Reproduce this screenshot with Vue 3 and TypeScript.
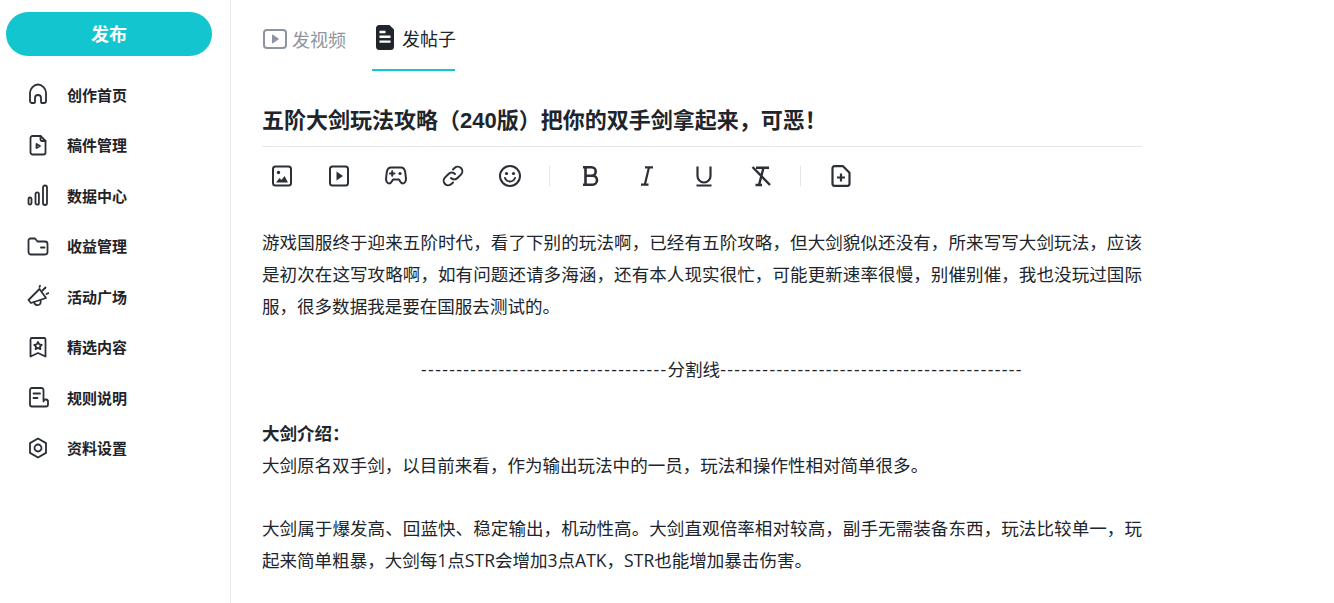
<script setup lang="ts">
interface NavItem {
  label: string
  paths: string[]
}

const navItems: NavItem[] = [
  { label: '创作首页', paths: ['M3 18V9.500C3 6 7 1.500 11 1.500S19 6 19 9.500V18a2 2 0 0 1-2 2h-2a1 1 0 0 1-1-1V15a3 3 0 0 0-6 0v4a1 1 0 0 1-1 1H5a2 2 0 0 1-2-2Z'] },
  { label: '稿件管理', paths: ['M5.500 2H13.500L18.500 7V18.500a2 2 0 0 1-2 2H5.500a2 2 0 0 1-2-2V4a2 2 0 0 1 2-2Z', 'M13.500 2V5.500a1.500 1.500 0 0 0 1.500 1.500H18.500', 'M9.500 10 13 12 9.500 14Z'] },
  { label: '数据中心', paths: ['M1.500 15a1.500 1.500 0 0 1 3 0v4a1.500 1.500 0 0 1-3 0Z', 'M8.500 10a1.700 1.700 0 0 1 3.400 0v9a1.700 1.700 0 0 1-3.400 0Z', 'M16 3.500a2 2 0 0 1 4 0V19a2 2 0 0 1-4 0Z'] },
  { label: '收益管理', paths: ['M1.500 5.500a2 2 0 0 1 2-2h4.500L10.500 6.500H18a2.500 2.500 0 0 1 2.500 2.500V17A2.500 2.500 0 0 1 18 19.500H4A2.500 2.500 0 0 1 1.500 17Z', 'M14 12.500H17.500'] },
  { label: '活动广场', paths: ['M12.500 4 19 13 4 18 1.500 15Z', 'M7 17c.5 2.500 2.500 3.500 4.500 3s2.500-2.500 2-5', 'M15.500 5.500l3-3', 'M19.500 9l2-.8', 'M12.500 2l.5-1.200'] },
  { label: '精选内容', paths: ['M5 2H17a1.500 1.500 0 0 1 1.500 1.500V20.500L11 17 3.500 20.500V3.500A1.500 1.500 0 0 1 5 2Z', 'M11 6l1.300 2.400 2.500.4-1.800 1.800.4 2.500-2.400-1.200-2.400 1.200.4-2.500-1.800-1.800 2.500-.4Z'] },
  { label: '规则说明', paths: ['M16.500 14V4a2 2 0 0 0-2-2H5a2 2 0 0 0-2 2V18.500a2 2 0 0 0 2 2H19a2 2 0 0 0 2-2V16a2.200 2.200 0 0 0-4.500-.5', 'M6.500 7.500H13', 'M6.500 12H10.500'] },
  { label: '资料设置', paths: ['M11 1.500 19 6.100V15.900L11 20.500 3 15.900V6.100Z', 'M11 7.500a3.500 3.500 0 1 1 0 7 3.500 3.500 0 0 1 0-7Z'] },
]

const leftDashes = '-'.repeat(35)
const rightDashes = '-'.repeat(43)
</script>

<template>
  <div class="page">
    <aside class="side">
      <button class="publish">发布</button>
      <nav class="nav">
        <a v-for="item in navItems" :key="item.label" class="nav-item">
          <svg class="nav-icon" viewBox="0 0 22 22" fill="none" stroke="#2b2f36" stroke-width="1.800" stroke-linejoin="round" stroke-linecap="round">
            <path v-for="d in item.paths" :key="d" :d="d" />
          </svg>
          <span>{{ item.label }}</span>
        </a>
      </nav>
    </aside>

    <main class="main">
      <div class="tabs">
        <div class="tab">
          <svg class="tab-icon video" viewBox="0 0 24 20" fill="none">
            <rect x="1" y="1" width="22" height="18" rx="3" stroke="#8f959e" stroke-width="2" />
            <path d="M9.500 6v8l6-4Z" fill="#8f959e" stroke="#8f959e" stroke-linejoin="round" />
          </svg>
          <span>发视频</span>
        </div>
        <div class="tab active">
          <svg class="tab-icon doc" viewBox="0 0 18 25">
            <path d="M3.500 0H13.500L18 4.500V21.500a3.500 3.500 0 0 1-3.500 3.500H3.500A3.500 3.500 0 0 1 0 21.500V3.500A3.500 3.500 0 0 1 3.500 0Z" fill="#20242b" />
            <path d="M3.500 7h6M3.500 11.800h11M3.500 16.600h11" stroke="#fff" stroke-width="2.400" />
          </svg>
          <span>发帖子</span>
        </div>
      </div>

      <h1 class="title">五阶大剑玩法攻略（240版）把你的双手剑拿起来，可恶！</h1>

      <div class="toolbar">
        <div class="tool-group">
          <svg class="tool" viewBox="0 0 22 22" fill="none" stroke="#2b2f36" stroke-width="2" stroke-linejoin="round">
            <rect x="2" y="1.500" width="18" height="19" rx="2.500" />
            <circle cx="7.500" cy="7.500" r="1.700" fill="#2b2f36" stroke="none" />
            <path d="M5 17.500 8.500 13l2 2 3-4 3.500 6.500Z" fill="#2b2f36" stroke="none" />
          </svg>
          <svg class="tool" viewBox="0 0 22 22" fill="none" stroke="#2b2f36" stroke-width="2" stroke-linejoin="round">
            <rect x="2" y="1.500" width="18" height="19" rx="2.500" />
            <path d="M8.500 6.500v9l6.500-4.500Z" fill="#2b2f36" stroke="none" />
          </svg>
          <svg class="tool" viewBox="0 0 22 22" fill="none" stroke="#2b2f36" stroke-width="2" stroke-linecap="round" stroke-linejoin="round">
            <path d="M6 2.500h10c2.500 0 3.700 2 4.200 4.500l.7 6c.3 3-1 5.500-3 5.500-1.500 0-2.300-1.200-3-2.500L14 14.500H8l-.9 1.500c-.7 1.300-1.500 2.500-3 2.500-2 0-3.300-2.500-3-5.500l.7-6C2.300 4.500 3.500 2.500 6 2.500Z" />
            <path d="M5 8.500h4.500M7.200 6.300v4.400" />
            <circle cx="15" cy="8.500" r="1.600" fill="#2b2f36" stroke="none" />
          </svg>
          <svg class="tool" viewBox="0 0 22 22" fill="none" stroke="#2b2f36" stroke-width="2" stroke-linecap="round">
            <path d="M9 13a4.500 4.500 0 0 0 6.500 0l3.600-3.600A4.600 4.600 0 0 0 12.600 2.900L11 4.500" />
            <path d="M13 9a4.500 4.500 0 0 0-6.500 0l-3.600 3.600a4.600 4.600 0 0 0 6.500 6.500L11 17.500" />
          </svg>
          <svg class="tool" viewBox="0 0 22 22" fill="none" stroke="#2b2f36" stroke-width="2" stroke-linecap="round">
            <circle cx="11" cy="11" r="10" />
            <circle cx="7.500" cy="8.500" r="1.600" fill="#2b2f36" stroke="none" />
            <circle cx="14.500" cy="8.500" r="1.600" fill="#2b2f36" stroke="none" />
            <path d="M6 13c1 2.500 3 3.500 5 3.500s4-1 5-3.500" />
          </svg>
        </div>
        <i class="sep"></i>
        <div class="tool-group">
          <svg class="tool" viewBox="0 0 22 22" fill="none" stroke="#2b2f36" stroke-width="2.600" stroke-linejoin="round">
            <path d="M4 2.300h8.500a4.200 4.200 0 0 1 0 8.400H6.500 13.500a4.500 4.500 0 0 1 0 9H4M6.500 2.300V19.700" />
          </svg>
          <svg class="tool" viewBox="0 0 22 22" fill="none" stroke="#2b2f36" stroke-width="2.200">
            <path d="M9 2.300h8M5 19.700h7.500M13 2.300 8.800 19.700" />
          </svg>
          <svg class="tool" viewBox="0 0 22 22" fill="none" stroke="#2b2f36" stroke-width="2.200">
            <path d="M4.500 1.500V11a6.500 6.500 0 0 0 13 0V1.500M3.500 20.500h15" />
          </svg>
          <svg class="tool" viewBox="0 0 22 22" fill="none" stroke="#2b2f36" stroke-width="2.400">
            <path d="M6 2.800H19M13.500 2.800 9 20M5.500 20h6.500M2.500 2 20 20" />
          </svg>
        </div>
        <i class="sep"></i>
        <svg class="tool" viewBox="0 0 22 22" fill="none" stroke="#2b2f36" stroke-width="2.200" stroke-linejoin="round">
          <path d="M4.500 1.200H13L19.500 7.700V18.800a2 2 0 0 1-2 2H4.500a2 2 0 0 1-2-2V3.200a2 2 0 0 1 2-2Z" />
          <path d="M7 12.500h8M11 8.500v8" />
        </svg>
      </div>

      <article class="content">
        <p>游戏国服终于迎来五阶时代，看了下别的玩法啊，已经有五阶攻略，但大剑貌似还没有，所来写写大剑玩法，应该是初次在这写攻略啊，如有问题还请多海涵，还有本人现实很忙，可能更新速率很慢，别催别催，我也没玩过国际服，很多数据我是要在国服去测试的。</p>
        <p class="blank"></p>
        <p class="center"><span class="dashes">{{ leftDashes }}</span>分割线<span class="dashes">{{ rightDashes }}</span></p>
        <p class="blank"></p>
        <p><strong>大剑介绍：</strong></p>
        <p>大剑原名双手剑，以目前来看，作为输出玩法中的一员，玩法和操作性相对简单很多。</p>
        <p class="blank"></p>
        <p>大剑属于爆发高、回蓝快、稳定输出，机动性高。大剑直观倍率相对较高，副手无需装备东西，玩法比较单一，玩起来简单粗暴，大剑每1点STR会增加3点ATK，STR也能增加暴击伤害。</p>
      </article>
    </main>
  </div>
</template>

<style scoped>
.page {
  display: flex;
  height: 603px;
  overflow: hidden;
  font-family: "Open Sans", "Noto Sans CJK SC", sans-serif;
  color: #18191c;
  background: #fff;
}

.side {
  width: 231px;
  flex: none;
  box-sizing: border-box;
  border-right: 1px solid #e8eaed;
  padding: 12px 18px 0 6px;
}

.publish {
  display: block;
  width: 206px;
  height: 44px;
  padding: 0 0 2px;
  border: none;
  border-radius: 22px;
  background: #13c5ce;
  color: #fff;
  font: inherit;
  font-size: 18px;
  font-weight: 700;
}

.nav {
  margin-top: 13px;
}

.nav-item {
  display: flex;
  align-items: center;
  gap: 18px;
  height: 50.500px;
  padding-left: 21px;
  font-size: 15px;
  font-weight: 700;
  color: #1f2329;
}

.nav-icon {
  width: 22px;
  height: 22px;
  flex: none;
}

.main {
  width: 880px;
  margin-left: 31px;
}

.tabs {
  display: flex;
  gap: 26px;
  height: 71px;
}

.tab {
  display: flex;
  align-items: center;
  height: 71px;
  padding-top: 6px;
  box-sizing: border-box;
  font-size: 18px;
  white-space: nowrap;
  color: #8f959e;
}

.tab.active {
  width: 83px;
  padding-left: 4px;
  border-bottom: 2px solid #13c5ce;
  color: #20242b;
}

.tab-icon {
  flex: none;
}

.video {
  width: 24px;
  height: 20px;
  margin: 0 5px 0 1px;
}

.doc {
  width: 18px;
  height: 25px;
  margin-right: 8px;
}

.title {
  margin: 0;
  padding-top: 33px;
  height: 76px;
  box-sizing: border-box;
  border-bottom: 1px solid #e5e6e8;
  font-family: "Liberation Sans", "Noto Sans CJK SC", sans-serif;
  font-size: 22px;
  line-height: 34px;
  font-weight: 700;
  color: #20242b;
}

.toolbar {
  display: flex;
  align-items: center;
  height: 57px;
  padding-left: 9px;
}

.tool-group {
  display: flex;
  gap: 35px;
}

.tool {
  width: 22px;
  height: 22px;
  flex: none;
}

.sep {
  width: 1px;
  height: 20px;
  background: #e5e6e8;
  margin: 0 29px 0 28px;
}

.content {
  padding-top: 23px;
  font-size: 17.550px;
  line-height: 31.800px;
  color: #20242b;
}

.content p {
  margin: 0;
  text-align: justify;
}

.content .center {
  padding-left: 40px;
  text-align: center;
}

.dashes {
  letter-spacing: 1.400px;
}

.blank {
  height: 31.800px;
}
</style>
